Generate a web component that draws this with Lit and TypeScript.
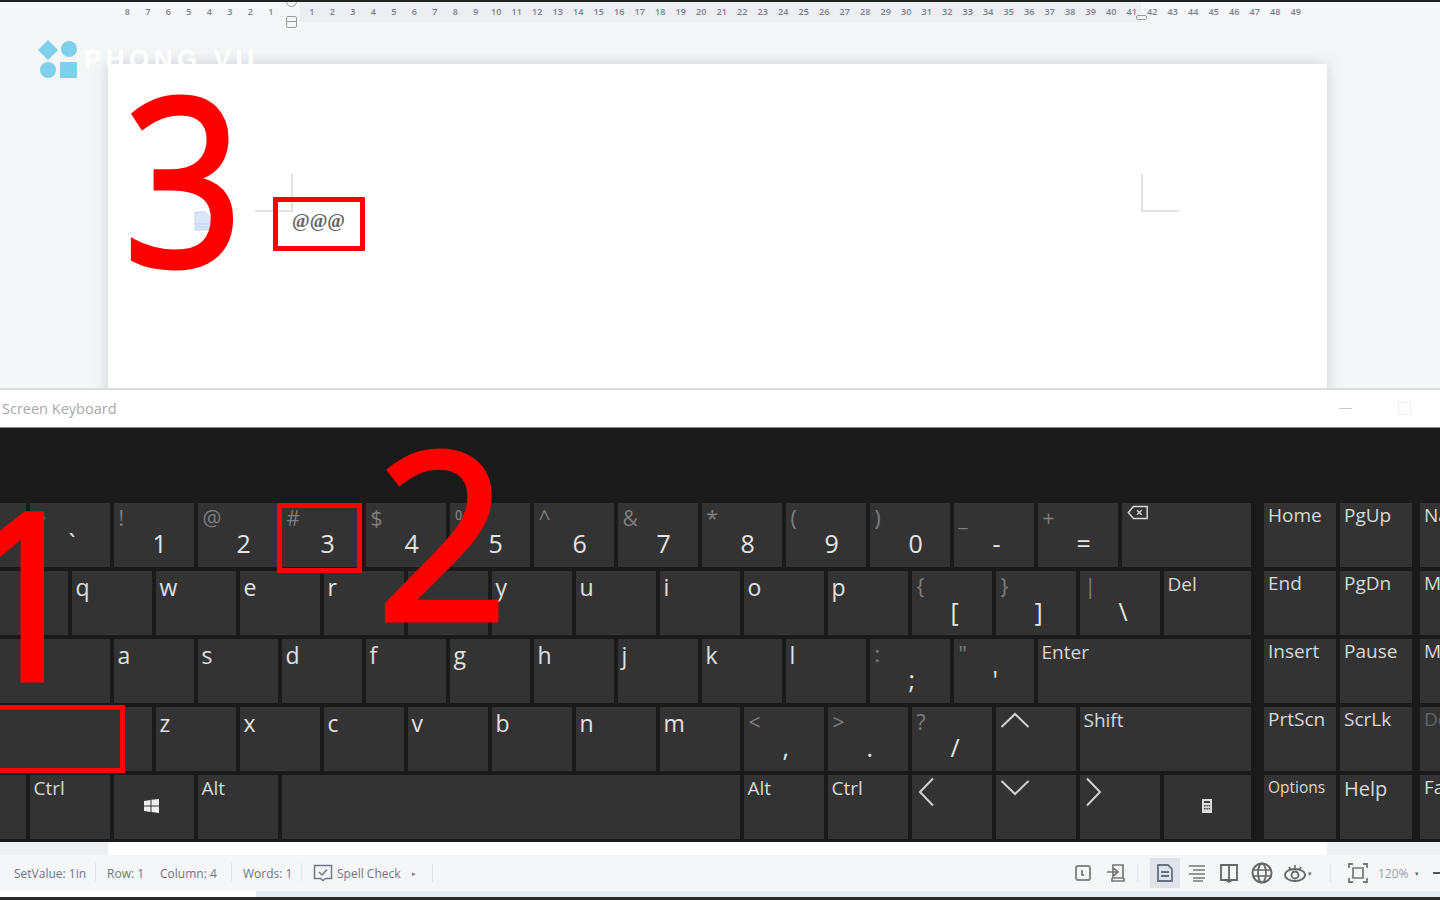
import { LitElement, html, css, svg } from "lit";
import { customElement } from "lit/decorators.js";

type K = { w: number; top?: string; main?: string; label?: string; icon?: string };
const k = (top: string, main: string, w = 80): K => ({ w, top, main });
const l = (main: string, w = 80): K => ({ w, label: main });
const rows: K[][] = [
  [{ w: 25.5 }, k("~", "`"), k("!", "1"), k("@", "2"), k("#", "3"), k("$", "4"), k("%", "5"), k("^", "6"), k("&", "7"), k("*", "8"), k("(", "9"), k(")", "0"), k("_", "-"), k("+", "="), { w: 129.5, icon: "back" }],
  [{ w: 67.5 }, l("q"), l("w"), l("e"), l("r"), l("t"), l("y"), l("u"), l("i"), l("o"), l("p"), k("{", "["), k("}", "]"), k("|", "\\"), l("Del", 87.5)],
  [{ w: 109.5 }, l("a"), l("s"), l("d"), l("f"), l("g"), l("h"), l("j"), l("k"), l("l"), k(":", ";"), k('"', "'"), l("Enter", 213.5)],
  [{ w: 151.5 }, l("z"), l("x"), l("c"), l("v"), l("b"), l("n"), l("m"), k("<", ","), k(">", "."), k("?", "/"), { w: 80, icon: "up" }, l("Shift", 171.5)],
  [{ w: 25.5 }, l("Ctrl"), { w: 80, icon: "win" }, l("Alt"), { w: 458 }, l("Alt"), l("Ctrl"), { w: 80, icon: "left" }, { w: 80, icon: "down" }, { w: 80, icon: "right" }, { w: 87.5, icon: "calc" }],
];
const nav: string[][] = [
  ["Home", "PgUp", "Nav"],
  ["End", "PgDn", "Mv Up"],
  ["Insert", "Pause", "Mv Dn"],
  ["PrtScn", "ScrLk", "Dock"],
  ["Options", "Help", "Fade"],
];
const rulerLeft = [8, 7, 6, 5, 4, 3, 2, 1];
const rulerRight = Array.from({ length: 49 }, (_, i) => i + 1);

const icons: Record<string, unknown> = {
  back: svg`<svg class="i back" viewBox="0 0 24 16"><path d="M7 1.5h15v13H7L1.5 8z" fill="none" stroke="#d8d8d8" stroke-width="1.6"/><path d="M11 5.5l5 5M16 5.5l-5 5" stroke="#d8d8d8" stroke-width="1.5"/></svg>`,
  up: svg`<svg class="i chev-v" viewBox="0 0 30 16"><path d="M1.5 15L15 2l13.5 13" fill="none" stroke="#d0d0d0" stroke-width="2"/></svg>`,
  down: svg`<svg class="i chev-v" viewBox="0 0 30 16"><path d="M1.5 1L15 14 28.5 1" fill="none" stroke="#d0d0d0" stroke-width="2"/></svg>`,
  left: svg`<svg class="i chev-h" viewBox="0 0 16 30"><path d="M15 1.5L2 15l13 13.5" fill="none" stroke="#d0d0d0" stroke-width="2"/></svg>`,
  right: svg`<svg class="i chev-h" viewBox="0 0 16 30"><path d="M1 1.5L14 15 1 28.5" fill="none" stroke="#d0d0d0" stroke-width="2"/></svg>`,
  win: svg`<svg class="i win" viewBox="0 0 15 14"><path d="M0 2l6.5-1v5.500H0zM7.500.8L15 0v6.500H7.500zM0 7.500h6.500V13L0 12zM7.500 7.500H15V14l-7.500-1z" fill="#eee"/></svg>`,
  calc: svg`<svg class="i calc" viewBox="0 0 10 14"><path d="M0 0h10v14H0z" fill="#ddd"/><path d="M2 2h6v2H2zM2 6h1.500v1.500H2zM4.300 6h1.500v1.500H4.300zM6.600 6h1.500v1.500H6.600zM2 9h1.500v1.500H2zM4.300 9h1.500v1.500H4.300zM6.600 9h1.500v1.500H6.600z" fill="#444"/></svg>`,
};

@customElement("app-root")
export class AppRoot extends LitElement {
  static styles = css`
    :host { display: block; width: 1440px; height: 900px; overflow: hidden; position: relative; font-family: "Open Sans", "Liberation Sans", sans-serif; background: #f5f6f8; }
    .shell { width: 1440px; height: 900px; display: flex; flex-direction: column; filter: blur(0.6px); position: relative; }
    .topline { height: 2px; background: #222; flex: none; }
    .doc { height: 388px; flex: none; position: relative; overflow: hidden; background: #f5f6f8; border-bottom: 2px solid #dcdde0; box-sizing: border-box; }
    .ruler { display: flex; align-items: center; height: 18px; padding-bottom: 2px; color: #7b8190; font-size: 9px; font-weight: 600; padding-left: 117px; position: relative; }
    .ruler span { width: 20.5px; flex: none; text-align: center; position: relative; }
    .shade { position: absolute; left: 300px; width: 841px; top: 0; height: 20px; background: #eceef2; }
    .marker { position: absolute; left: 286px; top: 14px; width: 9px; height: 10px; border: 1.5px solid #9a9ca4; border-radius: 2px; background: linear-gradient(#f5f6f8 45%, #9a9ca4 45%, #9a9ca4 55%, #f5f6f8 55%); }
    .marker.t { top: -2px; height: 5px; border-radius: 0 0 6px 6px; background: #f5f6f8; }
    .marker.r { left: 1136px; top: 13px; height: 3px; width: 9px; background: #f5f6f8; }
    .page { position: absolute; left: 108px; top: 62px; width: 1219px; height: 340px; background: #fff; box-shadow: 0 0 14px rgba(90, 95, 110, 0.26); }
    .crop { position: absolute; border-color: #e2e2e2; border-style: solid; border-width: 0; width: 36px; height: 36px; }
    .crop.a { left: 147px; top: 110px; border-right-width: 2px; border-bottom-width: 2px; }
    .crop.b { left: 1033px; top: 110px; border-left-width: 2px; border-bottom-width: 2px; }
    .ats { position: absolute; left: 184px; top: 146px; font-size: 19px; font-weight: 700; color: #666; font-family: "Liberation Serif", serif; }
    .docicon { position: absolute; left: 86px; top: 147px; width: 18px; height: 20px; }
    .titlebar { height: 37px; flex: none; background: #fff; display: flex; align-items: center; justify-content: space-between; padding: 0 29px 0 2px; color: #a9a9a9; font-size: 14.5px; border-bottom: 1px solid #888; box-sizing: content-box; }
    .wincontrols { display: flex; gap: 46px; align-items: center; }
    .min { width: 13px; height: 1.5px; background: #c8c8c8; }
    .max { width: 11px; height: 11px; border: 1px solid #f0f0f0; }
    .kb { height: 414px; flex: none; background: #1a1a1a; display: flex; gap: 13px; padding-top: 75px; box-sizing: border-box; overflow: hidden; }
    .keys, .navs { display: flex; flex-direction: column; gap: 4px; flex: none; }
    .row { display: flex; gap: 4px; height: 64px; }
    .key { flex: none; height: 64px; background: #333; position: relative; color: #e4e4e4; box-sizing: border-box; }
    .top { position: absolute; left: 5px; top: 0px; font-size: 21px; color: #7f7f7f; line-height: 30px; }
    .main { position: absolute; left: 39px; top: 20px; font-size: 25px; line-height: 40px; }
    .label { position: absolute; left: 4px; top: 0px; font-size: 23px; line-height: 32px; color: #e0e0e0; }
    .wide { font-size: 19px; color: #d8d8d8; line-height: 30px; top: -2px; }
    .navrow { display: flex; gap: 4px; height: 64px; }
    .navkey { width: 72px; height: 64px; background: #333; flex: none; position: relative; color: #d8d8d8; font-size: 19px; }
    .navkey.third { margin-left: 4px; }
    .navkey span { position: absolute; left: 4px; top: -3px; line-height: 30px; white-space: nowrap; }
    .navkey .opts { font-size: 15.5px; }
    .navkey.dim { color: #666; }
    .navkey .hlp { font-size: 20px; top: -1px; }
    .i { position: absolute; display: block; }
    .back { left: 5px; top: 2px; width: 22px; height: 15px; }
    .chev-v { left: 4px; top: 5px; width: 30px; height: 16px; }
    .chev-h { left: 6px; top: 2px; width: 16px; height: 30px; }
    .win { left: 30px; top: 24px; width: 15px; height: 14px; }
    .calc { left: 38px; top: 24px; width: 10px; height: 14px; }
    .gapband { height: 13px; flex: none; background: #fff; position: relative; }
    .gapband i { position: absolute; top: 0; height: 13px; background: #eeeff1; }
    .gapband i.l { left: 0; width: 108px; }
    .gapband i.r { left: 1327px; width: 113px; }
    .status { height: 36px; flex: none; background: #f5f6f8; display: flex; align-items: center; font-size: 12px; color: #6f7585; position: relative; padding-left: 14px; }
    .status span { white-space: nowrap; }
    .sl { display: flex; align-items: center; }
    .s1 { width: 93px; } .s2 { width: 53px; } .s3 { width: 83px; } .s4 { width: 70px; }
    .sp { position: relative; }
    .sp::after { content: ""; position: absolute; right: 11px; top: -2px; width: 1px; height: 18px; background: #e3e4e8; }
    .spell { display: flex; align-items: center; gap: 4px; }
    .spell svg, .sr svg { display: block; flex: none; }
    .tri { margin-left: 11px; font-size: 7px; }
    .sr { position: absolute; left: 1074px; top: 0; height: 36px; display: flex; align-items: center; color: #666; }
    .active { width: 30px; height: 30px; background: #e0e4ea; display: flex; align-items: center; justify-content: center; margin: 0 7px 0 24px; }
    .dash { position: absolute; left: 1433px; top: 17px; width: 7px; height: 2px; background: #555; }
    .vsep { position: absolute; top: 9px; width: 1px; height: 18px; background: #e3e4e8; }
    .bottom { height: 6px; flex: none; background: linear-gradient(90deg, #fff 256px, #e3ebf2 256px); }
    .blackline { height: 3px; flex: none; background: #2a2a2a; }
    .logo { position: absolute; left: 38px; top: 40px; width: 40px; height: 38px; }
    .wm { position: absolute; left: 84px; top: 41px; color: #fff; font-size: 26px; letter-spacing: 4.5px; font-weight: 700; line-height: 36px; font-family: "Liberation Sans", sans-serif; white-space: nowrap; }
    .bignum { position: absolute; color: #f00; font-size: 232px; line-height: 240px; font-family: "Open Sans", sans-serif; font-weight: 400; -webkit-text-stroke: 5px #f00; }
    .n3 { left: 117px; top: 56px; transform: scaleX(0.9); }
    .n2 { left: 376px; top: 410px; }
    .n1 { left: -40px; top: 470px; }
    .redbox { position: absolute; border: 5px solid #f00; box-sizing: border-box; border-radius: 1px; }
    .rb1 { left: 273px; top: 197px; width: 92px; height: 54px; }
    .rb2 { left: 277px; top: 503px; width: 85px; height: 70px; }
    .rb3 { left: -6px; top: 705px; width: 131px; height: 68px; }
  `;

  private renderKey(key: K) {
    return html`<div class="key" style="width:${key.w}px">
      ${key.top ? html`<span class="top">${key.top}</span>` : ""}
      ${key.main ? html`<span class="main">${key.main}</span>` : ""}
      ${key.label ? html`<span class="label ${key.label.length > 1 ? "wide" : ""}">${key.label}</span>` : ""}
      ${key.icon ? icons[key.icon] : ""}
    </div>`;
  }

  render() {
    return html`<div class="shell">
      <div class="topline"></div>
      <div class="doc">
        <div class="shade"></div>
        <div class="ruler">
          ${rulerLeft.map((n) => html`<span>${n}</span>`)}<span></span>${rulerRight.map((n) => html`<span>${n}</span>`)}
        </div>
        <div class="marker t"></div><div class="marker"></div><div class="marker r"></div>
        <div class="page">
          <div class="crop a"></div>
          <div class="crop b"></div>
          <svg class="docicon" viewBox="0 0 18 20"><path d="M1 1h10l6 6v12H1z" fill="#dbe6f6" stroke="#c3d4ef"/><path d="M3 13h12M3 16h12" stroke="#bcd0ee"/></svg>
          <div class="ats">@@@</div>
        </div>
      </div>
      <div class="titlebar"><span>Screen Keyboard</span><div class="wincontrols"><div class="min"></div><div class="max"></div></div></div>
      <div class="kb">
        <div class="keys">${rows.map((r) => html`<div class="row">${r.map((key) => this.renderKey(key))}</div>`)}</div>
        <div class="navs">${nav.map((r) => html`<div class="navrow">${r.map((t, i) => html`<div class="navkey ${i === 2 ? "third" : ""} ${t === "Dock" ? "dim" : ""}"><span class="${t === "Options" ? "opts" : t === "Help" ? "hlp" : ""}">${t}</span></div>`)}</div>`)}</div>
      </div>
      <div class="gapband"><i class="l"></i><i class="r"></i></div>
      <div class="status">
        <div class="sl">
          <span class="s1 sp">SetValue: 1in</span><span class="s2">Row: 1</span><span class="s3 sp">Column: 4</span><span class="s4 sp">Words: 1</span>
          <div class="spell">
            <svg width="20" height="19" viewBox="0 0 20 19"><path d="M1.5 1.5h17v13h-6l-2.500 2-2.500-2h-6z" fill="none" stroke="#6f7585" stroke-width="1.500"/><path d="M6 8l3 3 5-5.500" fill="none" stroke="#6f7585" stroke-width="1.500"/></svg>
            <span>Spell Check</span>
          </div>
          <span class="tri">▸</span>
        </div>
        <div class="vsep" style="left:432px"></div>
        <div class="vsep" style="left:1137px"></div>
        <div class="vsep" style="left:1330px"></div>
        <div class="sr">
          <svg width="18" height="18" viewBox="0 0 18 18"><rect x="2" y="2" width="14" height="14" rx="2" fill="none" stroke="#888" stroke-width="2"/><path d="M8 6v5h2" fill="none" stroke="#666" stroke-width="1.500"/></svg>
          <svg style="margin-left:14px" width="20" height="20" viewBox="0 0 20 20"><path d="M7 6V2h10v13H7zM1 9h11M8 5.500l4 3.500-4 3.500M6 15v3h12v-3" fill="none" stroke="#777" stroke-width="1.700"/></svg>
          <div class="active"><svg width="20" height="20" viewBox="0 0 20 20"><path d="M3 2h10l4 4v12H3zM6 9h8M6 13h8" fill="none" stroke="#6a7080" stroke-width="1.800"/></svg></div>
          <svg width="20" height="20" viewBox="0 0 20 20"><path d="M2 3h16M6 7h12M2 11h16M6 15h12M6 18h10" stroke="#777" stroke-width="1.500"/></svg>
          <svg style="margin-left:12px" width="20" height="20" viewBox="0 0 20 20"><path d="M2 2h16v15H2zM10 2v15M7 17l3 2 3-2" fill="none" stroke="#666" stroke-width="1.800"/></svg>
          <svg style="margin-left:12px" width="22" height="22" viewBox="0 0 22 22"><circle cx="11" cy="11" r="9.500" fill="none" stroke="#666" stroke-width="2"/><ellipse cx="11" cy="11" rx="4" ry="9.500" fill="none" stroke="#666" stroke-width="1.800"/><path d="M2 8h18M2 14h18" stroke="#666" stroke-width="1.600"/></svg>
          <svg style="margin-left:11px" width="22" height="22" viewBox="0 0 22 22"><ellipse cx="11" cy="13" rx="10" ry="6" fill="none" stroke="#666" stroke-width="1.800"/><circle cx="11" cy="13" r="3.500" fill="none" stroke="#666" stroke-width="1.800"/><path d="M5 5l1.500 2.500M11 3v3M17 5l-1.500 2.500" stroke="#666" stroke-width="1.500"/></svg>
          <span class="tri" style="margin-left:2px">▾</span>
          <svg style="margin-left:36px" width="20" height="20" viewBox="0 0 20 20"><path d="M1 5V1h4M15 1h4v4M19 15v4h-4M5 19H1v-4" fill="none" stroke="#777" stroke-width="1.800"/><path d="M5 5h10v10H5z" fill="none" stroke="#777" stroke-width="1.700"/></svg>
          <span style="margin-left:10px;color:#9a9ea8;font-size:12px">120%</span>
          <span class="tri" style="margin-left:6px">▾</span>
        </div>
        <div class="dash"></div>
      </div>
      <div class="bottom"></div>
      <div class="blackline"></div>
      <svg class="logo" viewBox="0 0 40 38"><path d="M10 0l10 10-10 10L0 10z" fill="#7fd0ea"/><circle cx="31" cy="9" r="8" fill="#7fd0ea"/><circle cx="10" cy="30" r="8" fill="#7fd0ea"/><path d="M22 22h17v16H22z" fill="#7fd0ea"/></svg>
      <div class="wm">PHONG VU</div>
      <div class="bignum n3">3</div>
      <div class="bignum n2">2</div>
      <div class="bignum n1">1</div>
      <div class="redbox rb1"></div>
      <div class="redbox rb2"></div>
      <div class="redbox rb3"></div>
    </div>`;
  }
}
